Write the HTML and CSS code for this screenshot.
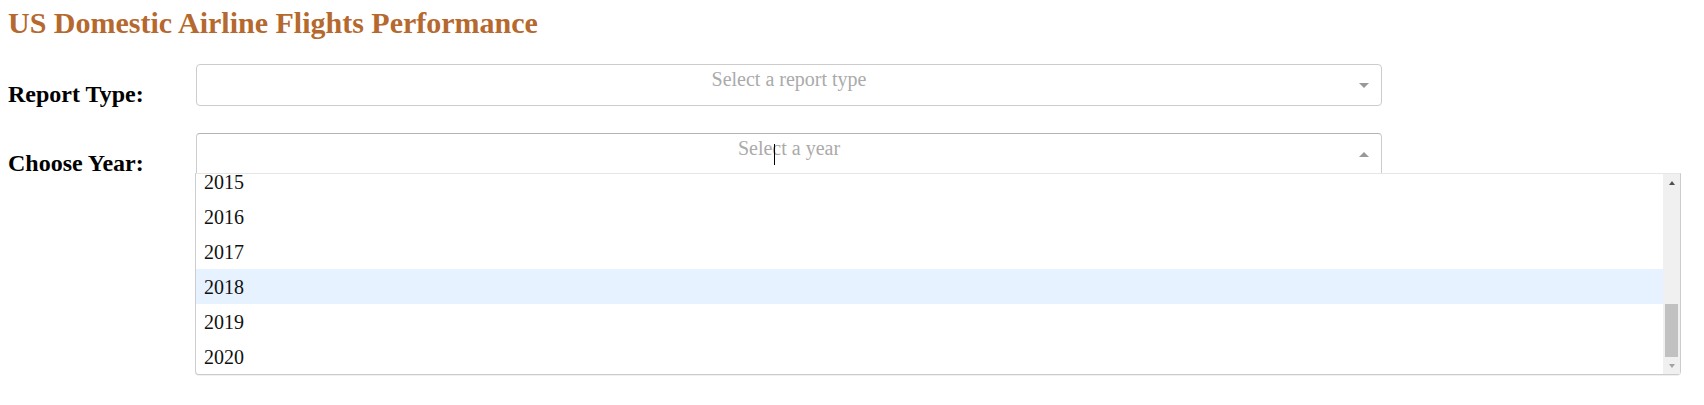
FILE: index.html
```html
<!DOCTYPE html>
<html lang="en">
<head>
<meta charset="utf-8">
<title>US Domestic Airline Flights Performance</title>
<link rel="stylesheet" href="styles.css">
</head>
<body>
<div class="page">
<h1 class="title">US Domestic Airline Flights Performance</h1>

<div class="field-row">
  <div class="field-label">Report Type:</div>
  <div class="select">
    <div class="select-control">
      <div class="select-value">Select a report type</div>
      <div class="select-arrow-zone"><span class="arrow arrow-down"></span></div>
    </div>
  </div>
</div>

<div class="field-row second">
  <div class="field-label">Choose Year:</div>
  <div class="select is-open">
    <div class="select-control">
      <div class="select-value">Select a year</div>
      <div class="select-arrow-zone"><span class="arrow arrow-up"></span></div>
      <span class="ibeam"></span>
    </div>
    <div class="select-menu">
      <div class="menu-list">
        <div class="option">2015</div>
        <div class="option">2016</div>
        <div class="option">2017</div>
        <div class="option is-focused">2018</div>
        <div class="option">2019</div>
        <div class="option">2020</div>
      </div>
      <div class="scrollbar">
        <div class="sb-button"><span class="sb-arrow sb-up"></span></div>
        <div class="sb-track"><div class="sb-thumb"></div></div>
        <div class="sb-button"><span class="sb-arrow sb-down"></span></div>
      </div>
    </div>
  </div>
</div>
</div>
</body>
</html>
```

FILE: styles.css
```css
html, body {
  background: #ffffff;
}
body {
  margin: 8px;
  font-family: "Liberation Serif", "Times New Roman", serif;
  color: #000;
}
.page {
  min-height: 389px;
}

.title {
  margin: 0;
  height: 30px;
  font-size: 30px;
  line-height: 30px;
  font-weight: bold;
  color: #b5692e;
}

.field-row {
  display: flex;
  align-items: flex-start;
  margin-top: 26px;
}
.field-row.second {
  margin-top: 25px;
}

.field-label {
  width: 188px;
  flex: none;
  margin-top: 17px;
  font-size: 24px;
  font-weight: bold;
  line-height: 27px;
}

.select {
  position: relative;
  width: 1186px;
  font-size: 20px;
}

.select-control {
  position: relative;
  display: flex;
  height: 42px;
  box-sizing: border-box;
  border: 1px solid #ccc;
  border-radius: 4px;
  background: #fff;
}
.is-open .select-control {
  border-color: #b3b3b3 #ccc #d9d9d9;
  border-bottom-left-radius: 0;
  border-bottom-right-radius: 0;
}

.select-value {
  flex: 1;
  padding: 3px 0 0 34px;
  text-align: center;
  color: #aaa;
  line-height: 23px;
  white-space: nowrap;
}

.select-arrow-zone {
  width: 34px;
  flex: none;
  display: flex;
  align-items: center;
  justify-content: center;
}
.arrow {
  display: block;
  width: 0;
  height: 0;
  border-style: solid;
}
.arrow-down {
  border-width: 5px 5px 2.5px;
  border-color: #999 transparent transparent;
  margin-top: 2px;
}
.arrow-up {
  border-width: 0 5px 5px;
  border-color: transparent transparent #999;
}

.ibeam {
  position: absolute;
  left: 577px;
  top: 10px;
  width: 1px;
  height: 21px;
  background: #000;
}

.select-menu {
  position: absolute;
  top: 40px;
  left: -1px;
  width: 1486px;
  height: 202px;
  box-sizing: border-box;
  display: flex;
  background: #fff;
  border: 1px solid #ccc;
  border-top-color: #e6e6e6;
  border-radius: 0 0 4px 4px;
  box-shadow: 0 1px 0 rgba(0, 0, 0, 0.06);
  z-index: 1;
}

.menu-list {
  flex: 1;
  min-height: 0;
  display: flex;
  flex-direction: column;
  justify-content: flex-end;
  overflow: hidden;
}
.option {
  flex: none;
  height: 35px;
  display: flex;
  align-items: center;
  padding: 0 8px;
  color: #111;
  line-height: 1;
}
.option.is-focused {
  background: #e6f2ff;
}

.scrollbar {
  width: 17px;
  flex: none;
  display: flex;
  flex-direction: column;
  background: #f0f0f0;
}
.sb-button {
  height: 17px;
  flex: none;
  display: flex;
  align-items: center;
  justify-content: center;
}
.sb-arrow {
  display: block;
  width: 0;
  height: 0;
  border-style: solid;
}
.sb-up {
  border-width: 0 3.5px 4px;
  border-color: transparent transparent #505050;
}
.sb-down {
  border-width: 4px 3.5px 0;
  border-color: #a3a3a3 transparent transparent;
}
.sb-track {
  flex: 1;
  display: flex;
  flex-direction: column;
  justify-content: flex-end;
}
.sb-thumb {
  height: 53px;
  margin: 0 2px;
  background: #c1c1c1;
}
```
